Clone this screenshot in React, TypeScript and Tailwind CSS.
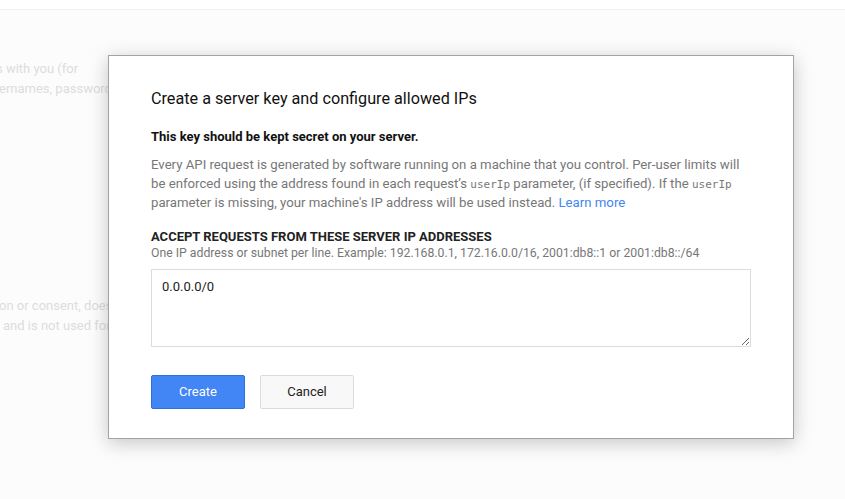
export default function App() {
  const font = { fontFamily: 'Roboto, "Noto Sans", Arial, sans-serif' };
  const mono = { fontFamily: '"DejaVu Sans Mono", monospace' };
  return (
    <div className="relative h-[499px] w-[845px] overflow-hidden bg-[#fcfcfc]" style={font}>
      <div className="h-[10px] border-b border-[#f1f1f1] bg-white" />

      {/* faded page behind the dialog */}
      <div className="pt-[49px] text-[13px] leading-[20px] text-[#dcdcdc]">
        <div className="ml-[-4px] whitespace-nowrap">s with you (for</div>
        <div className="ml-[-1px] whitespace-nowrap">ernames, passwords and other account details</div>
        <div className="mt-[197px] ml-[-1px] whitespace-nowrap">on or consent, does not share information</div>
        <div className="ml-[3px] whitespace-nowrap">and is not used for any other purpose</div>
      </div>

      <div className="absolute left-[108px] top-[55px] w-[686px] border border-[#a3a3a3] bg-white px-[42px] pt-[31px] pb-[29px] shadow-[0_4px_18px_rgba(0,0,0,0.22)]">
        <h1 className="text-[16.2px] leading-[24px] font-normal text-[#111]">
          Create a server key and configure allowed IPs
        </h1>
        <p className="mt-[16px] text-[13px] leading-[20px] font-bold text-[#111]">
          This key should be kept secret on your server.
        </p>
        <p className="mt-[9px] w-[610px] text-[13.2px] leading-[18.5px] text-[#777]">
          <span className="whitespace-nowrap">
            Every API request is generated by software running on a machine that you control. Per-user limits will
          </span>
          <br />
          <span className="whitespace-nowrap">
            be enforced using the address found in each request’s{' '}
            <code className="text-[11px]" style={mono}>userIp</code> parameter, (if specified). If the{' '}
            <code className="text-[11px]" style={mono}>userIp</code>
          </span>
          <br />
          parameter is missing, your machine's IP address will be used instead.{' '}
          <a className="text-[#4285f4]">Learn more</a>
        </p>
        <div className="mt-[16px] text-[13px] leading-[16px] font-bold text-[#222] uppercase">
          Accept requests from these server IP addresses
        </div>
        <div className="text-[12.25px] leading-[16px] text-[#777]">
          One IP address or subnet per line. Example: 192.168.0.1, 172.16.0.0/16, 2001:db8::1 or 2001:db8::/64
        </div>
        <textarea
          className="mt-[8px] block h-[78px] w-[600px] border border-[#dcdcdc] px-[10px] py-[8px] text-[13px] leading-[18px] text-[#222] outline-none"
          style={font}
          defaultValue="0.0.0.0/0"
        />
        <div className="mt-[28px] flex gap-[15px]">
          <button className="h-[34px] w-[94px] rounded-[2px] border border-[#2f6fe0] bg-[#4285f4] text-[13px] text-white">
            Create
          </button>
          <button className="h-[34px] w-[94px] rounded-[2px] border border-[#dcdcdc] bg-[#f8f8f8] text-[13px] text-[#222]">
            Cancel
          </button>
        </div>
      </div>
    </div>
  );
}
